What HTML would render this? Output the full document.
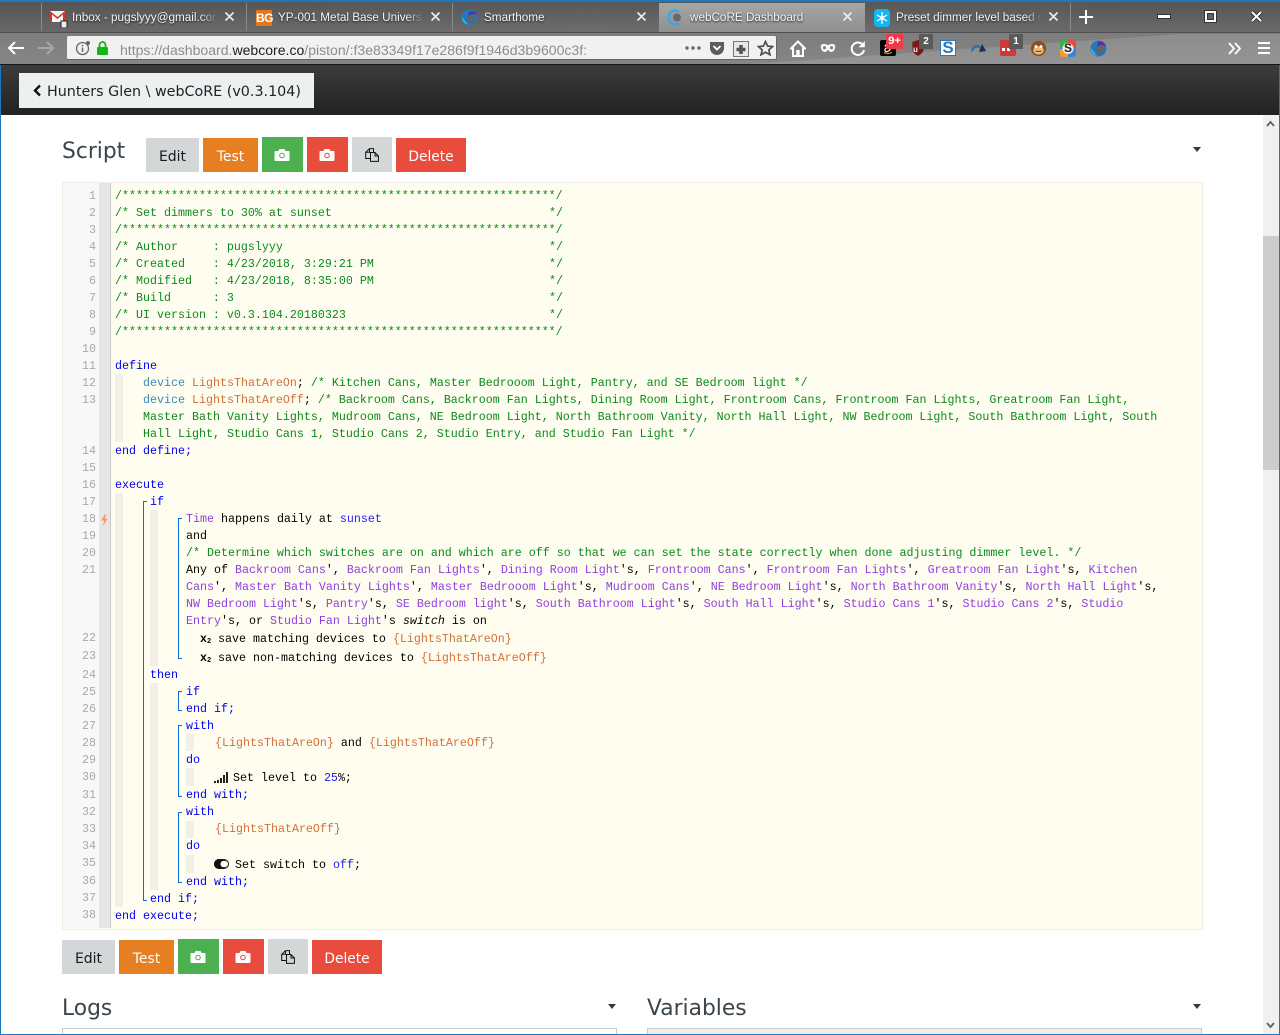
<!DOCTYPE html>
<html lang="en"><head><meta charset="utf-8"><title>webCoRE Dashboard</title>
<style>
html,body{margin:0;padding:0;width:1280px;height:1035px;overflow:hidden;background:#fff}
body{position:relative;font-family:"DejaVu Sans",sans-serif}
.a{position:absolute}
#chrome{left:0;top:0;width:1280px;height:65px;background:linear-gradient(#747474,#868686);overflow:hidden}
#tabbar{left:0;top:2px;width:1280px;height:30px;background:linear-gradient(90deg,#5d5d5d,#626262 45%,#5f5f5f);border-bottom:1px solid #505050}
#tabbar:before{content:"";position:absolute;inset:0;background:linear-gradient(180deg,rgba(0,0,0,.1),rgba(255,255,255,.07))}
.tab{position:absolute;top:3px;width:154px;height:29px;font:12.4px/29px "Liberation Sans",sans-serif;color:#f4f4f4;text-shadow:0 1px 2px #222;white-space:nowrap;overflow:hidden;transform:scaleX(.945);transform-origin:0 0;-webkit-mask-image:linear-gradient(90deg,#000 88%,transparent);mask-image:linear-gradient(90deg,#000 88%,transparent)}
.sep{position:absolute;top:3px;width:1px;height:28px;background:#8a8a8a}
.x{position:absolute;top:11px;width:11px;height:11px}
.code{left:62px;top:182px;width:1139px;height:746px;background:#fffdf0;border:1px solid #f0eee4}
.gut{left:63px;top:183px;width:36px;height:745px;background:#f8f8f8}
.fold{left:99px;top:183px;width:11px;height:745px;background:#e6e6e6;border-right:1px solid #c9c9c9}
.n{position:absolute;left:63px;width:33px;text-align:right;font:11.667px/17px "Liberation Mono",monospace;color:#a9a9a9}
.l{position:absolute;font:11.667px/17px "Liberation Mono",monospace;white-space:pre;color:#000}
.c{color:#0b8a1c}.k{color:#0000f0}.d{color:#8f3fe0}.v{color:#d2703c}.t{color:#3c8ab8}.b{color:#2222ee}
.bar{position:absolute;background:#f2f0e6;width:8px}
.br{position:absolute;width:3px;border:solid #0a6ed8;border-width:1px 0 1px 1px}
.btn{position:absolute;height:34px;font:14px/38px "DejaVu Sans",sans-serif;text-align:center;color:#fff}
.gr{background:#d3d7d8;color:#1a1a1a}.or{background:#e67e22}.gn{background:#4caf50}.rd{background:#e74c3c}
.h{position:absolute;font:21.8px/28px "DejaVu Sans",sans-serif;color:#3c444c}
.car{position:absolute;width:0;height:0;border:4.5px solid transparent;border-top:5px solid #33393f;border-bottom:0}
.ico{position:absolute}
.badge{position:absolute;font:bold 10px/14px "Liberation Sans",sans-serif;color:#fff;text-align:center}
sub{font-size:7px;line-height:0;vertical-align:-1px}
</style></head>
<body>
<div class="a" id="chrome">
 <div class="a" id="tabbar"></div>
 <div class="a" style="left:0;top:0;width:1280px;height:2px;background:#1b78c4"></div>
 <div class="a" style="left:640px;top:34px;width:640px;height:30px;background:linear-gradient(176deg,transparent 50%,rgba(255,255,255,.12) 51%)"></div>

 <div class="sep" style="left:41px"></div><div class="sep" style="left:246px"></div><div class="sep" style="left:452px"></div><div class="sep" style="left:1070px"></div>
 <div class="a" style="left:659px;top:3px;width:206px;height:29px;background:linear-gradient(#a6a6a6,#8f8f8f)"></div>

 <svg class="ico" style="left:50px;top:10px" width="18" height="18" viewBox="0 0 18 18"><rect x="0" y="1" width="15" height="11" fill="#f4f4f4"/><path d="M0 1l7.500 6L15 1v11h-2V4.500L7.500 9 2 4.500V12H0z" fill="#d8322c"/><rect x="11" y="11" width="6" height="7" fill="#eee" stroke="#222"/></svg>
 <div class="tab" style="left:72px">Inbox - pugslyyy@gmail.com</div>
 <svg class="x" style="left:224px" viewBox="0 0 11 11"><path d="M1.500 1.500l8 8M9.500 1.500l-8 8" stroke="#eee" stroke-width="1.600"/></svg>

 <div class="a" style="left:256px;top:10px;width:16px;height:16px;background:#e4761e;color:#fff;font:bold 12px/16px 'Liberation Sans',sans-serif;text-align:center;letter-spacing:-.5px">BG</div>
 <div class="tab" style="left:278px">YP-001 Metal Base Universal</div>
 <svg class="x" style="left:430px" viewBox="0 0 11 11"><path d="M1.500 1.500l8 8M9.500 1.500l-8 8" stroke="#eee" stroke-width="1.600"/></svg>

 <svg class="ico" style="left:461px;top:9px" width="17" height="17" viewBox="0 0 17 17"><circle cx="8.500" cy="8.500" r="8" fill="#1f78c8"/><path d="M8 3a6 6 0 0 1 8 3 8 8 0 0 0-9 1z" fill="#5b2a9c"/><circle cx="10" cy="10" r="4.500" fill="#5a6670"/><path d="M1 8a8 8 0 0 0 6 8z" fill="#27c6d8"/></svg>
 <div class="tab" style="left:484px">Smarthome</div>
 <svg class="x" style="left:636px" viewBox="0 0 11 11"><path d="M1.500 1.500l8 8M9.500 1.500l-8 8" stroke="#eee" stroke-width="1.600"/></svg>

 <svg class="ico" style="left:668px;top:9px" width="16" height="17" viewBox="0 0 16 17"><path d="M11 2.500A7 7 0 1 0 11 14.500" fill="none" stroke="#29a9ee" stroke-width="2"/><circle cx="9" cy="8.500" r="4" fill="#686868"/></svg>
 <div class="tab" style="left:690px">webCoRE Dashboard</div>
 <svg class="x" style="left:842px" viewBox="0 0 11 11"><path d="M1.500 1.500l8 8M9.500 1.500l-8 8" stroke="#eee" stroke-width="1.600"/></svg>

 <svg class="ico" style="left:874px;top:9px" width="16" height="18" viewBox="0 0 16 18"><rect width="16" height="18" rx="4" fill="#12b6f2"/><path d="M8 3v12M3 6l10 6M13 6L3 12" stroke="#fff" stroke-width="1.300"/><circle cx="8" cy="9" r="2" fill="#fff"/></svg>
 <div class="tab" style="left:896px">Preset dimmer level based on</div>
 <svg class="x" style="left:1048px" viewBox="0 0 11 11"><path d="M1.500 1.500l8 8M9.500 1.500l-8 8" stroke="#eee" stroke-width="1.600"/></svg>

 <svg class="ico" style="left:1079px;top:10px" width="14" height="14" viewBox="0 0 14 14"><path d="M7 0v14M0 7h14" stroke="#fff" stroke-width="2"/></svg>
 <div class="a" style="left:1158px;top:15px;width:12px;height:3px;background:#fff;box-shadow:0 0 0 1px #333"></div>
 <div class="a" style="left:1205px;top:11px;width:7px;height:7px;border:2px solid #fff;box-shadow:0 0 0 1px #333,inset 0 0 0 1px #333"></div>
 <svg class="ico" style="left:1250px;top:10px" width="13" height="13" viewBox="0 0 13 13"><path d="M2 2l9 9M11 2l-9 9" stroke="#222" stroke-width="3.600"/><path d="M2 2l9 9M11 2l-9 9" stroke="#fff" stroke-width="2"/></svg>

 <svg class="ico" style="left:7px;top:40px" width="18" height="16" viewBox="0 0 18 16"><path d="M17 8H2M8 2L2 8l6 6" fill="none" stroke="#fff" stroke-width="2"/></svg>
 <svg class="ico" style="left:37px;top:40px" width="18" height="16" viewBox="0 0 18 16"><path d="M1 8h15M10 2l6 6-6 6" fill="none" stroke="#a8a8a8" stroke-width="2"/></svg>
 <div class="a" style="left:67px;top:36px;width:710px;height:24px;background:#f1f1f1;border:1px solid #666;border-width:0 1px 1px 0;border-radius:2px;box-sizing:border-box"></div>
 <svg class="ico" style="left:75px;top:40px" width="16" height="16" viewBox="0 0 16 16"><circle cx="7.500" cy="8.500" r="6" fill="none" stroke="#666" stroke-width="1.300"/><path d="M7.500 7.500V12" stroke="#666" stroke-width="1.500"/><rect x="6.800" y="4.800" width="1.500" height="1.500" fill="#666"/><circle cx="13" cy="3" r="2" fill="#666"/></svg>
 <svg class="ico" style="left:96px;top:41px" width="13" height="15" viewBox="0 0 13 15"><rect x="1" y="6" width="11" height="8" rx="1" fill="#13b713"/><path d="M3.500 6V4a3 3 0 0 1 6 0v2" fill="none" stroke="#13b713" stroke-width="1.800"/></svg>
 <div class="a" style="left:120px;top:41px;font:14.060px/18px 'Liberation Sans',sans-serif;color:#8d8d8d;white-space:nowrap">https://dashboard.<span style="color:#1d1d1d">webcore.co</span>/piston/:f3e83349f17e286f9f1946d3b9600c3f:</div>
 <svg class="ico" style="left:684px;top:46px" width="18" height="4" viewBox="0 0 18 4"><circle cx="3" cy="2" r="1.700" fill="#666"/><circle cx="9" cy="2" r="1.700" fill="#666"/><circle cx="15" cy="2" r="1.700" fill="#666"/></svg>
 <svg class="ico" style="left:709px;top:41px" width="16" height="15" viewBox="0 0 16 15"><path d="M1 1h14v6a7 7 0 0 1-14 0z" fill="#5c5c5c"/><path d="M4.500 5L8 8.500 11.500 5" fill="none" stroke="#fff" stroke-width="1.800"/></svg>
 <svg class="ico" style="left:733px;top:41px" width="16" height="16" viewBox="0 0 16 16"><rect x=".5" y=".5" width="15" height="15" fill="#e8e8e8" stroke="#777"/><path d="M8 4v9M3.500 8.500h9" stroke="#555" stroke-width="3.500"/></svg>
 <svg class="ico" style="left:757px;top:40px" width="17" height="16" viewBox="0 0 17 16"><path d="M8.500 1.500l2.100 4.600 5 .5-3.800 3.300 1.200 4.900-4.500-2.600-4.500 2.600L5.200 9.900 1.400 6.600l5-.5z" fill="none" stroke="#505050" stroke-width="1.700"/></svg>

 <svg class="ico" style="left:790px;top:40px" width="16" height="17" viewBox="0 0 16 17"><path d="M8 1.500L1 8.500h2V16h10V8.500h2z" fill="none" stroke="#fff" stroke-width="2"/><rect x="6.300" y="10" width="3.400" height="5" fill="#fff"/></svg>
 <svg class="ico" style="left:820px;top:43px" width="16" height="10" viewBox="0 0 16 10"><path d="M1 2c3-2 4-1 7 0 3-1 4-2 7 0 1 3-1 7-4 7-2 0-2-2-3-2s-1 2-3 2C2 9 0 5 1 2z" fill="#f4f4f4"/><circle cx="4.500" cy="4.800" r="1.500" fill="#777"/><circle cx="11.500" cy="4.800" r="1.500" fill="#777"/></svg>
 <svg class="ico" style="left:850px;top:40px" width="16" height="16" viewBox="0 0 16 16"><path d="M13.500 6A6.200 6.200 0 1 0 14 10" fill="none" stroke="#fff" stroke-width="2"/><path d="M14.800 1v6.200H8.600z" fill="#fff"/></svg>

 <div class="a" style="left:880px;top:40px;width:16px;height:16px;background:#000;border-radius:2px"></div>
 <svg class="ico" style="left:883px;top:43px" width="10" height="11" viewBox="0 0 10 11"><path d="M7 7V3.500C7 1 2 1 2 3.500M7 4.500C3 4.500 1.500 5.500 2 7.500s4 1 5-1" fill="none" stroke="#fff" stroke-width="1.200"/><path d="M1 9.500c3 1.500 6 1 8-.3" fill="none" stroke="#f90" stroke-width="1"/></svg>
 <div class="badge" style="left:886px;top:34px;width:17px;height:15px;line-height:15px;background:#ee3b49;font-size:11px">9+</div>

 <svg class="ico" style="left:911px;top:40px" width="14" height="16" viewBox="0 0 14 17"><path d="M1 2l6-2 6 2v7c0 4-3 6-6 8-3-2-6-4-6-8z" fill="#7b1818"/></svg>
 <div class="a" style="left:913px;top:45px;font:bold 8px/10px 'Liberation Sans',sans-serif;color:#eee">u</div>
 <div class="badge" style="left:919px;top:34px;width:14px;height:15px;line-height:15px;background:#5a5a5a">2</div>

 <div class="a" style="left:940px;top:40px;width:16px;height:16px;background:#fff;box-shadow:inset 0 0 0 1px #2d79b8"></div>
 <div class="a" style="left:940px;top:39px;width:16px;font:bold 17px/18px 'Liberation Sans',sans-serif;color:#2d79b8;text-align:center">S</div>

 <svg class="ico" style="left:970px;top:41px" width="17" height="13" viewBox="0 0 17 13"><path d="M1 11C2 4 7 2 11 6l1-3 4 7-7 1 2-2C8 5 5 6 3 10z" fill="#2f6fb0"/><path d="M11 6l1-3 4 7-7 1z" fill="#20304a"/></svg>

 <div class="a" style="left:1000px;top:40px;width:16px;height:16px;background:#d33636;border-radius:2px"></div>
 <div class="a" style="left:1002px;top:48px;width:3px;height:3px;background:#fff;box-shadow:5px 0 #fff"></div>
 <div class="badge" style="left:1009px;top:34px;width:14px;height:15px;line-height:15px;background:#5a5a5a">1</div>

 <svg class="ico" style="left:1030px;top:39px" width="17" height="18" viewBox="0 0 17 19"><circle cx="8.500" cy="10" r="8" fill="#8a4f1c"/><ellipse cx="8.500" cy="12" rx="5.500" ry="4.500" fill="#e8bc7a"/><circle cx="5.800" cy="8" r="1.500" fill="#fff"/><circle cx="11.200" cy="8" r="1.500" fill="#fff"/><path d="M5.500 13h6" stroke="#5a3010"/></svg>

 <svg class="ico" style="left:1060px;top:40px" width="16" height="17" viewBox="0 0 16 17"><rect width="16" height="17" rx="3" fill="#3b83d9"/><path d="M0 3a3 3 0 0 1 3-3h5v8H0z" fill="#36b24a"/><path d="M8 0h5a3 3 0 0 1 3 3v5H8z" fill="#e84a3c"/><path d="M0 9h8v8H3a3 3 0 0 1-3-3z" fill="#f29f1f"/><circle cx="8" cy="8.500" r="5.500" fill="#eee"/></svg>
 <div class="a" style="left:1060px;top:40px;width:16px;font:bold 12px/17px 'Liberation Sans',sans-serif;color:#222;text-align:center">S</div>

 <svg class="ico" style="left:1090px;top:40px" width="17" height="17" viewBox="0 0 17 17"><circle cx="8.500" cy="8.500" r="8" fill="#1f78c8"/><path d="M8 2a6 6 0 0 1 8 4 8 8 0 0 0-9 1z" fill="#5b2a9c"/><circle cx="10" cy="10" r="4.500" fill="#5a6670"/><path d="M1 8a8 8 0 0 0 6 8z" fill="#27c6d8"/></svg>

 <svg class="ico" style="left:1228px;top:42px" width="14" height="13" viewBox="0 0 14 13"><path d="M1 1l5 5.500L1 12M7 1l5 5.500L7 12" fill="none" stroke="#fff" stroke-width="1.800"/></svg>
 <div class="a" style="left:1258px;top:42px;width:12px;height:2px;background:#fff;box-shadow:0 5px #fff,0 10px #fff"></div>
</div>

<div class="a" style="left:0;top:64px;width:1280px;height:1px;background:#161616"></div>
<div class="a" style="left:0;top:65px;width:1280px;height:50px;background:linear-gradient(#3c3c3c,#222)"></div>
<div class="a" style="left:19px;top:73px;width:295px;height:35px;background:#ecf0f1"></div>
<svg class="ico" style="left:33px;top:84px" width="9" height="13" viewBox="0 0 9 13"><path d="M7 1.500L2 6.500l5 5" fill="none" stroke="#111" stroke-width="2.400"/></svg>
<div class="a" style="left:47px;top:82px;font:14.300px/20px 'DejaVu Sans',sans-serif;color:#222;white-space:nowrap">Hunters Glen \ webCoRE (v0.3.104)</div>

<div class="h" style="left:62px;top:138px">Script</div>
<div class="btn gr" style="left:146px;top:138px;width:53px">Edit</div>
<div class="btn or" style="left:203px;top:138px;width:55px">Test</div>
<div class="btn gn" style="left:262px;top:137px;width:41px;height:35px"></div>
<div class="btn rd" style="left:307px;top:137px;width:41px;height:35px"></div>
<div class="btn gr" style="left:352px;top:137px;width:40px;height:35px"></div>
<div class="btn rd" style="left:396px;top:138px;width:70px;font-size:13.800px">Delete</div>
<svg class="ico" style="left:274px;top:149px" width="16" height="12" viewBox="0 0 15 12"><path d="M1 2h3l1-2h5l1 2h3a1 1 0 0 1 1 1v8a1 1 0 0 1-1 1H1a1 1 0 0 1-1-1V3a1 1 0 0 1 1-1z" fill="#fff"/><circle cx="7.500" cy="6.500" r="2.300" fill="#fff" stroke="#4caf50" stroke-width="1"/></svg>
<svg class="ico" style="left:319px;top:149px" width="16" height="12" viewBox="0 0 15 12"><path d="M1 2h3l1-2h5l1 2h3a1 1 0 0 1 1 1v8a1 1 0 0 1-1 1H1a1 1 0 0 1-1-1V3a1 1 0 0 1 1-1z" fill="#fff"/><circle cx="7.500" cy="6.500" r="2.300" fill="#fff" stroke="#e74c3c" stroke-width="1"/></svg>
<svg class="ico" style="left:365px;top:148px" width="14" height="14" viewBox="0 0 14 14"><path d="M4.500.6H8.500V4.500M4.500.6L.7 4.300V10.500H5.500M4.500.6V4.300H.7" fill="none" stroke="#111" stroke-width="1"/><path d="M10 4.500H5.500V13.400H13.400V8z M10 4.500V8H13.400" fill="none" stroke="#111" stroke-width="1"/></svg>
<div class="car" style="left:1193px;top:147px"></div>

<div class="a code"></div><div class="a gut"></div><div class="a fold"></div>
<svg class="ico" style="left:101px;top:514px" width="7" height="12" viewBox="0 0 7 13"><path d="M4 0L0 7h3l-1 6 5-8H4l1-5z" fill="#f59a62"/></svg>

<div class="bar" style="left:115px;top:374px;height:68px"></div>
<div class="bar" style="left:115px;top:493px;height:414px"></div>
<div class="bar" style="left:150px;top:510px;height:156px"></div>
<div class="bar" style="left:150px;top:683px;height:207px"></div>
<div class="bar" style="left:186px;top:734px;height:17px"></div>
<div class="bar" style="left:186px;top:768px;height:18px"></div>
<div class="bar" style="left:186px;top:821px;height:17px"></div>
<div class="bar" style="left:186px;top:855px;height:18px"></div>
<div class="br" style="left:143px;top:501px;height:398px"></div>
<div class="br" style="left:178px;top:518px;height:139px"></div>
<div class="br" style="left:178px;top:691px;height:18px"></div>
<div class="br" style="left:178px;top:725px;height:70px"></div>
<div class="br" style="left:178px;top:812px;height:69px"></div>

<div class="a" style="left:0;top:1px;width:1280px;height:930px">
<div class="n" style="top:187px">1</div><div class="n" style="top:204px">2</div><div class="n" style="top:221px">3</div><div class="n" style="top:238px">4</div><div class="n" style="top:255px">5</div><div class="n" style="top:272px">6</div><div class="n" style="top:289px">7</div><div class="n" style="top:306px">8</div><div class="n" style="top:323px">9</div><div class="n" style="top:340px">10</div><div class="n" style="top:357px">11</div><div class="n" style="top:374px">12</div><div class="n" style="top:391px">13</div><div class="n" style="top:442px">14</div><div class="n" style="top:459px">15</div><div class="n" style="top:476px">16</div><div class="n" style="top:493px">17</div><div class="n" style="top:510px">18</div><div class="n" style="top:527px">19</div><div class="n" style="top:544px">20</div><div class="n" style="top:561px">21</div><div class="n" style="top:629px">22</div><div class="n" style="top:647px">23</div><div class="n" style="top:666px">24</div><div class="n" style="top:683px">25</div><div class="n" style="top:700px">26</div><div class="n" style="top:717px">27</div><div class="n" style="top:734px">28</div><div class="n" style="top:751px">29</div><div class="n" style="top:768px">30</div><div class="n" style="top:786px">31</div><div class="n" style="top:803px">32</div><div class="n" style="top:820px">33</div><div class="n" style="top:837px">34</div><div class="n" style="top:854px">35</div><div class="n" style="top:872px">36</div><div class="n" style="top:889px">37</div><div class="n" style="top:906px">38</div>

<div class="l c" style="left:115px;top:187px">/**************************************************************/</div>
<div class="l c" style="left:115px;top:204px">/* Set dimmers to 30% at sunset<span class="a" style="left:434px">*/</span></div>
<div class="l c" style="left:115px;top:221px">/**************************************************************/</div>
<div class="l c" style="left:115px;top:238px">/* Author     : pugslyyy<span class="a" style="left:434px">*/</span></div>
<div class="l c" style="left:115px;top:255px">/* Created    : 4/23/2018, 3:29:21 PM<span class="a" style="left:434px">*/</span></div>
<div class="l c" style="left:115px;top:272px">/* Modified   : 4/23/2018, 8:35:00 PM<span class="a" style="left:434px">*/</span></div>
<div class="l c" style="left:115px;top:289px">/* Build      : 3<span class="a" style="left:434px">*/</span></div>
<div class="l c" style="left:115px;top:306px">/* UI version : v0.3.104.20180323<span class="a" style="left:434px">*/</span></div>
<div class="l c" style="left:115px;top:323px">/**************************************************************/</div>
<div class="l k" style="left:115px;top:357px">define</div>
<div class="l" style="left:143px;top:374px"><span class="t">device</span> <span class="v">LightsThatAreOn</span>; <span class="c">/* Kitchen Cans, Master Bedrooom Light, Pantry, and SE Bedroom light */</span></div>
<div class="l" style="left:143px;top:391px"><span class="t">device</span> <span class="v">LightsThatAreOff</span>; <span class="c">/* Backroom Cans, Backroom Fan Lights, Dining Room Light, Frontroom Cans, Frontroom Fan Lights, Greatroom Fan Light,</span></div>
<div class="l c" style="left:143px;top:408px">Master Bath Vanity Lights, Mudroom Cans, NE Bedroom Light, North Bathroom Vanity, North Hall Light, NW Bedroom Light, South Bathroom Light, South</div>
<div class="l c" style="left:143px;top:425px">Hall Light, Studio Cans 1, Studio Cans 2, Studio Entry, and Studio Fan Light */</div>
<div class="l k" style="left:115px;top:442px">end define;</div>
<div class="l k" style="left:115px;top:476px">execute</div>
<div class="l k" style="left:150px;top:493px">if</div>
<div class="l" style="left:186px;top:510px"><span class="d">Time</span> happens daily at <span class="b">sunset</span></div>
<div class="l" style="left:186px;top:527px">and</div>
<div class="l c" style="left:186px;top:544px">/* Determine which switches are on and which are off so that we can set the state correctly when done adjusting dimmer level. */</div>
<div class="l" style="left:186px;top:561px">Any of <span class="d">Backroom Cans</span>', <span class="d">Backroom Fan Lights</span>', <span class="d">Dining Room Light</span>'s, <span class="d">Frontroom Cans</span>', <span class="d">Frontroom Fan Lights</span>', <span class="d">Greatroom Fan Light</span>'s, <span class="d">Kitchen</span></div>
<div class="l" style="left:186px;top:578px"><span class="d">Cans</span>', <span class="d">Master Bath Vanity Lights</span>', <span class="d">Master Bedrooom Light</span>'s, <span class="d">Mudroom Cans</span>', <span class="d">NE Bedroom Light</span>'s, <span class="d">North Bathroom Vanity</span>'s, <span class="d">North Hall Light</span>'s,</div>
<div class="l" style="left:186px;top:595px"><span class="d">NW Bedroom Light</span>'s, <span class="d">Pantry</span>'s, <span class="d">SE Bedroom light</span>'s, <span class="d">South Bathroom Light</span>'s, <span class="d">South Hall Light</span>'s, <span class="d">Studio Cans 1</span>'s, <span class="d">Studio Cans 2</span>'s, <span class="d">Studio</span></div>
<div class="l" style="left:186px;top:612px"><span class="d">Entry</span>'s, or <span class="d">Studio Fan Light</span>'s <i>switch</i> is on</div>
<div class="l" style="left:200px;top:630px"><b>x<sub>2</sub></b></div><div class="l" style="left:218px;top:630px">save matching devices to <span class="v">{LightsThatAreOn}</span></div>
<div class="l" style="left:200px;top:649px"><b>x<sub>2</sub></b></div><div class="l" style="left:218px;top:649px">save non-matching devices to <span class="v">{LightsThatAreOff}</span></div>
<div class="l k" style="left:150px;top:666px">then</div>
<div class="l k" style="left:186px;top:683px">if</div>
<div class="l k" style="left:186px;top:700px">end if;</div>
<div class="l k" style="left:186px;top:717px">with</div>
<div class="l" style="left:215px;top:734px"><span class="v">{LightsThatAreOn}</span> and <span class="v">{LightsThatAreOff}</span></div>
<div class="l k" style="left:186px;top:751px">do</div>
<svg class="ico" style="left:214px;top:771px" width="14" height="11" viewBox="0 0 14 11"><path d="M0 9h2v2H0zM3 8h2v3H3zM6 6h2v5H6zM9 3h2v8H9zM12 0h2v11h-2z" fill="#222"/></svg>
<div class="l" style="left:233px;top:769px">Set level to <span class="b">25</span>%;</div>
<div class="l k" style="left:186px;top:786px">end with;</div>
<div class="l k" style="left:186px;top:803px">with</div>
<div class="l v" style="left:215px;top:820px">{LightsThatAreOff}</div>
<div class="l k" style="left:186px;top:837px">do</div>
<svg class="ico" style="left:214px;top:858px" width="15" height="10" viewBox="0 0 15 10"><rect x=".5" y=".5" width="14" height="9" rx="4.500" fill="#fff" stroke="#111"/><path d="M5 0h3a5 5 0 0 1 0 10H5A5 5 0 0 1 5 0z" fill="#111"/><circle cx="9.800" cy="5" r="3.300" fill="#fff"/></svg>
<div class="l" style="left:235px;top:856px">Set switch to <span class="b">off</span>;</div>
<div class="l k" style="left:186px;top:873px">end with;</div>
<div class="l k" style="left:150px;top:890px">end if;</div>
<div class="l k" style="left:115px;top:907px">end execute;</div>
</div>

<div class="btn gr" style="left:62px;top:940px;width:53px">Edit</div>
<div class="btn or" style="left:119px;top:940px;width:55px">Test</div>
<div class="btn gn" style="left:178px;top:939px;width:41px;height:35px"></div>
<div class="btn rd" style="left:223px;top:939px;width:41px;height:35px"></div>
<div class="btn gr" style="left:268px;top:939px;width:40px;height:35px"></div>
<div class="btn rd" style="left:312px;top:940px;width:70px;font-size:13.800px">Delete</div>
<svg class="ico" style="left:190px;top:951px" width="16" height="12" viewBox="0 0 15 12"><path d="M1 2h3l1-2h5l1 2h3a1 1 0 0 1 1 1v8a1 1 0 0 1-1 1H1a1 1 0 0 1-1-1V3a1 1 0 0 1 1-1z" fill="#fff"/><circle cx="7.500" cy="6.500" r="2.300" fill="#fff" stroke="#4caf50" stroke-width="1"/></svg>
<svg class="ico" style="left:235px;top:951px" width="16" height="12" viewBox="0 0 15 12"><path d="M1 2h3l1-2h5l1 2h3a1 1 0 0 1 1 1v8a1 1 0 0 1-1 1H1a1 1 0 0 1-1-1V3a1 1 0 0 1 1-1z" fill="#fff"/><circle cx="7.500" cy="6.500" r="2.300" fill="#fff" stroke="#e74c3c" stroke-width="1"/></svg>
<svg class="ico" style="left:281px;top:950px" width="14" height="14" viewBox="0 0 14 14"><path d="M4.500.6H8.500V4.500M4.500.6L.7 4.300V10.500H5.500M4.500.6V4.300H.7" fill="none" stroke="#111" stroke-width="1"/><path d="M10 4.500H5.500V13.400H13.400V8z M10 4.500V8H13.400" fill="none" stroke="#111" stroke-width="1"/></svg>

<div class="h" style="left:62px;top:995px">Logs</div>
<div class="h" style="left:647px;top:995px">Variables</div>
<div class="car" style="left:608px;top:1004px"></div>
<div class="car" style="left:1193px;top:1004px"></div>
<div class="a" style="left:62px;top:1028px;width:553px;height:10px;background:#fff;border:1px solid #ccc"></div>
<div class="a" style="left:647px;top:1028px;width:553px;height:10px;background:#eee;border:1px solid #ccc"></div>

<div class="a" style="left:1263px;top:115px;width:16px;height:920px;background:#f0f0f0"></div>
<div class="a" style="left:1263px;top:236px;width:16px;height:234px;background:#cdcdcd"></div>
<svg class="ico" style="left:1266px;top:120px" width="9" height="7" viewBox="0 0 9 7"><path d="M1 6l3.500-4L8 6" fill="none" stroke="#606060" stroke-width="1.800"/></svg>
<svg class="ico" style="left:1266px;top:1022px" width="9" height="7" viewBox="0 0 9 7"><path d="M1 1l3.500 4L8 1" fill="none" stroke="#606060" stroke-width="1.800"/></svg>
<div class="a" style="left:0;top:65px;width:1px;height:970px;background:#1b78c4"></div>
<div class="a" style="left:1279px;top:65px;width:1px;height:970px;background:#1b78c4"></div>
<div class="a" style="left:0;top:1034px;width:1280px;height:1px;background:#1b78c4"></div>
</body></html>
